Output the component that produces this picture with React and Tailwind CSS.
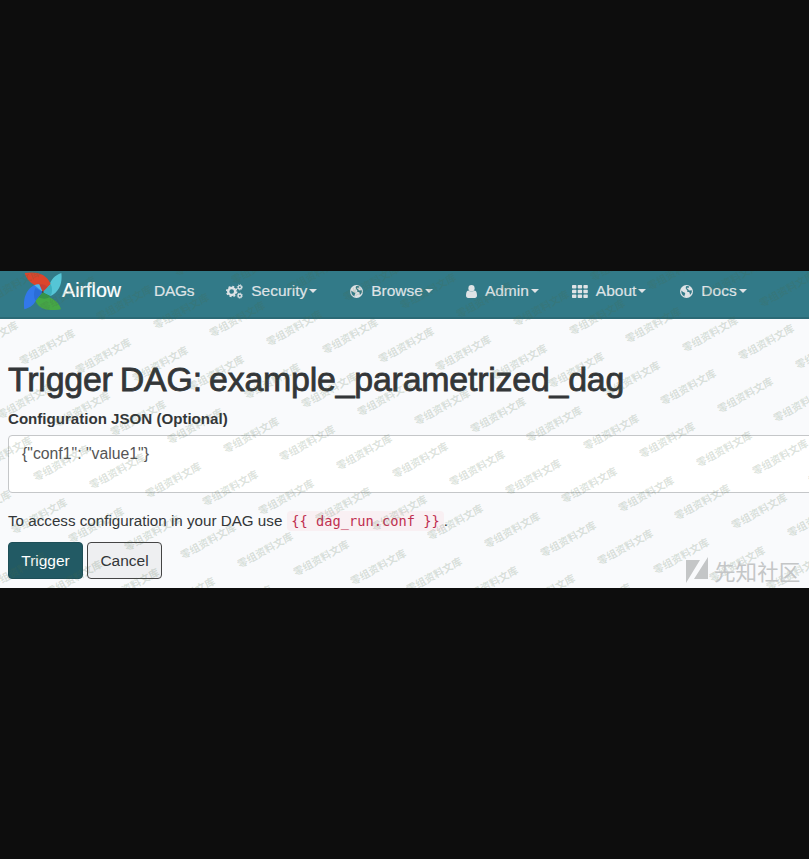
const items = [
  { label: "Security", icon: "cogs", pos: "ml-[32px]" },
  { label: "Browse", icon: "globe", pos: "ml-[33px]" },
  { label: "Admin", icon: "user", pos: "ml-[33px]" },
  { label: "About", icon: "th", pos: "ml-[33px]" },
  { label: "Docs", icon: "globe", pos: "ml-[34px]" },
];

function Icon({ name }) {
  if (name === "cogs")
    return (
      <svg viewBox="0 0 17 15" className="h-[15px] w-[17px] shrink-0" fill="none" stroke="currentColor">
        <circle cx="5.7" cy="7.5" r="3.5" strokeWidth="2.4" />
        <circle cx="5.7" cy="7.5" r="5" strokeWidth="1.5" strokeDasharray="1.96 1.967" />
        <circle cx="13.8" cy="3.3" r="1.7" strokeWidth="1.3" />
        <circle cx="13.8" cy="3.3" r="2.6" strokeWidth="0.9" strokeDasharray="1.02 1.02" />
        <circle cx="13.8" cy="11.7" r="1.7" strokeWidth="1.3" />
        <circle cx="13.8" cy="11.7" r="2.6" strokeWidth="0.9" strokeDasharray="1.02 1.02" />
      </svg>
    );
  if (name === "user")
    return (
      <svg viewBox="0 0 11 13" className="h-[13px] w-[11px] shrink-0" fill="currentColor">
        <ellipse cx="5.5" cy="3.3" rx="3.1" ry="3.3" />
        <path d="M2.2 5.4C.7 5.8 0 7.6 0 10.6C0 12.2.8 13 2.2 13H8.8C10.2 13 11 12.2 11 10.6C11 7.6 10.3 5.8 8.8 5.4C6.8 6.8 4.2 6.8 2.2 5.4Z" />
      </svg>
    );
  if (name === "th")
    return (
      <svg viewBox="0 0 16 13" className="h-[13px] w-[16px] shrink-0" fill="currentColor">
        {[0, 4.7, 9.4].map((y) =>
          [0, 5.7, 11.4].map((x) => <rect key={x + "-" + y} x={x} y={y} width="4.4" height="3.5" rx="0.7" />)
        )}
      </svg>
    );
  return (
    <svg viewBox="0 0 13 13" className="h-[13px] w-[13px] shrink-0">
      <circle cx="6.5" cy="6.5" r="6.5" fill="currentColor" />
      <path
        d="M6 1.2L8 1L9.4 1.8L8.2 2.9L7 2.6L6.8 3.6L8.1 4.1L8.6 5.2L9.6 5.5L11.8 5.2L11.8 7.2L10.6 9.4L9.7 9.2L9.8 8L9 7L7.6 6.9L7 5.9L7.5 5L6.4 4.6L5.7 3.3Z"
        fill="#327a88"
      />
      <path d="M1.3 5.4L3.1 6.9L4.9 7.8L5.3 9L4.6 9.9L4.5 11.4L2.7 10.2L1.5 8.2Z" fill="#327a88" />
    </svg>
  );
}

function Logo() {
  return (
    <svg viewBox="12 10 114 114" className="ml-[24px] h-[38px] w-[38px] shrink-0">
      <path d="M124 13C103 20 93 34 88 50L68 70L92 82C118 70 128 42 124 13Z" fill="#55c5d6" />
      <path d="M123 122C118 104 106 94 88 86L68 70L46 96C58 124 90 128 123 122Z" fill="#45a846" />
      <path d="M13 122C34 116 44 106 49 92L68 70L43 49C18 62 8 92 13 122Z" fill="#3278ea" />
      <path d="M68 70L92 82C82 92 69 92 55 86Z" fill="#35934a" />
      <path d="M68 70L46 96C40 84 41 70 46 58Z" fill="#2b6dd6" />
      <path d="M14 13C20 34 32 44 50 52L68 70L92 46C78 14 50 8 14 13Z" fill="#dc452c" />
      <path d="M68 70L43 50C48 47 53 46 58 47C64 52 67 60 68 70Z" fill="#4cb5ef" />
      <path d="M68 70L92 46C98 58 97 72 92 82Z" fill="#3db0c0" />
      <path d="M68 70L58 47C70 46 78 50 82 56Z" fill="#c63f35" />
      <circle cx="68" cy="70" r="3" fill="#3a4a50" />
    </svg>
  );
}

const marks = [];
for (let r = -4; r <= 6; r++) {
  for (let c = -9; c <= 12; c++) {
    const x = 350 + c * 56.4 - r * 21.3;
    const y = 65.3 + c * 8.45 + r * 53.4;
    if (x > -28 && x < 837 && y > -17 && y < 334) marks.push([x, y]);
  }
}

export default function App() {
  return (
    <div className="flex h-[859px] w-[809px] flex-col justify-start overflow-hidden bg-[#0d0d0d] pt-[271px] font-['Liberation_Sans',Arial,sans-serif]">
      <main className="relative h-[317px] overflow-hidden bg-[#f9fafc] text-[#333638]">
        <nav className="flex h-[48px] items-start border-b-2 border-[#2b6a76] bg-[#327a88] text-[15.5px] text-[#dfe3e6]">
          <div className="flex h-[40px] items-center">
            <Logo />
            <span className="text-[19.7px] text-white [-webkit-text-stroke:0.2px_white]">Airflow</span>
            <span className="ml-[33px] tracking-[-0.3px] [-webkit-text-stroke:0.2px_#dfe3e6]">DAGs</span>
            {items.map((it) => (
              <div key={it.label} className={"flex items-center " + it.pos}>
                <Icon name={it.icon} />
                <span className="ml-[8px] [-webkit-text-stroke:0.2px_#dfe3e6]">{it.label}</span>
                <span className="ml-[2px] border-x-4 border-t-4 border-x-transparent border-t-[#dfe3e6]" />
              </div>
            ))}
          </div>
        </nav>
        <section className="pl-[8px]">
          <h1 className="pt-[40px] text-[33.9px] leading-[40px] tracking-[-0.21px] [word-spacing:-2px] whitespace-nowrap [-webkit-text-stroke:0.8px_#333638]">
            Trigger DAG: example_parametrized_dag
          </h1>
          <div className="mt-[10px] text-[15.1px] leading-[20px] font-bold">Configuration JSON (Optional)</div>
          <div className="mt-[6px] h-[58px] w-[820px] rounded-[4px] border border-[#c5c7c9] bg-white px-[13px] pt-[8px] text-[15.8px] leading-[20px] text-[#555]">
            {'{"conf1": "value1"}'}
          </div>
          <p className="mt-[18px] flex h-[20px] items-center text-[15.2px] whitespace-nowrap">
            To access configuration in your DAG use
            <code className="ml-[5px] rounded-[4px] bg-[#f9f0f3] px-[4px] font-['DejaVu_Sans_Mono',monospace] text-[13.7px] leading-[20px] text-[#c02f50]">
              {"{{ dag_run.conf }}"}
            </code>
            <span>.</span>
          </p>
          <div className="mt-[11px] flex gap-[4px] text-[15.5px]">
            <button className="h-[37px] w-[75px] rounded-[4px] border border-[#1e4f58] bg-[#225a64] text-white">Trigger</button>
            <button className="h-[37px] w-[75px] rounded-[4px] border border-[#444] bg-[#eeeff1] text-[#333638]">Cancel</button>
          </div>
        </section>
        <div className="pointer-events-none absolute inset-0">
          {marks.map(([x, y], i) => (
            <span
              key={i}
              className="absolute -translate-x-1/2 -translate-y-1/2 -rotate-[29deg] font-['Noto_Sans_CJK_SC',sans-serif] text-[10.3px] leading-[12px] font-bold whitespace-nowrap text-[#4a6a4a]/20"
              style={{ left: x, top: y }}
            >
              零组资料文库
            </span>
          ))}
        </div>
        <div className="absolute top-[285px] left-[686px] flex items-center text-[#c4c6c7]">
          <svg viewBox="0 0 22 27" className="h-[27px] w-[22px]" fill="currentColor">
            <path d="M0 3H14L0 26ZM22 0V22H8Z" />
          </svg>
          <span className="ml-[6px] pt-[1px] font-['Noto_Sans_CJK_SC',sans-serif] text-[21.6px] leading-[27px] whitespace-nowrap">先知社区</span>
        </div>
      </main>
    </div>
  );
}
